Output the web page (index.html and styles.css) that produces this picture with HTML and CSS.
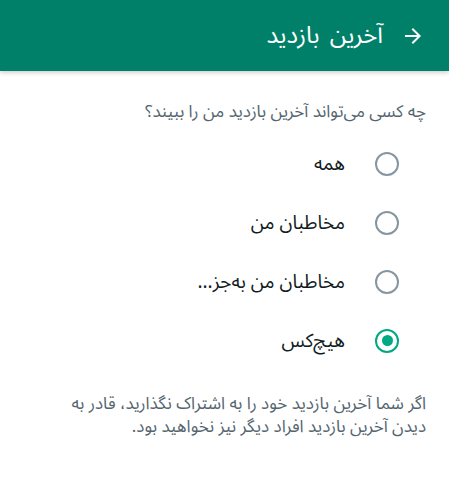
FILE: index.html
```html
<!DOCTYPE html>
<html lang="fa" dir="rtl">
<head>
    <meta charset="UTF-8">
    <meta name="viewport" content="width=device-width">
    <title>آخرین بازدید</title>
    <link rel="stylesheet" href="styles.css">
</head>
<body>
    <div class="appbar">
        <span class="back">
            <svg width="24" height="24" viewBox="0 0 24 24"><path d="M12 4l-1.41 1.41L16.17 11H4v2h12.17l-5.58 5.59L12 20l8-8z" fill="#fff"/></svg>
        </span>
        <span class="title">آخرین بازدید</span>
    </div>

    <div class="content">
        <p class="question">چه کسی می‌تواند آخرین بازدید من را ببیند؟</p>

        <div class="option">
            <span class="radio"></span>
            <span class="label">همه</span>
        </div>
        <div class="option">
            <span class="radio"></span>
            <span class="label">مخاطبان من</span>
        </div>
        <div class="option">
            <span class="radio"></span>
            <span class="label">مخاطبان من به‌جز...</span>
        </div>
        <div class="option">
            <span class="radio checked"></span>
            <span class="label">هیچ‌کس</span>
        </div>

        <p class="note">اگر شما آخرین بازدید خود را به اشتراک نگذارید، قادر به دیدن آخرین بازدید افراد دیگر نیز نخواهید بود.</p>
    </div>
</body>
</html>
```

FILE: styles.css
```css
body {
    margin: 0;
    padding: 0;
    background: #fff;
    font-family: "Noto Sans Arabic", "DejaVu Sans", sans-serif;
    color: #111b21;
}
.appbar {
    height: 71px;
    background-color: #008069;
    display: flex;
    align-items: center;
    padding: 0 24px 0 0;
    gap: 18px;
    box-shadow: 0 2px 4px rgba(0, 0, 0, 0.18);
    color: #fff;
}
.back {
    display: flex;
    width: 24px;
    height: 24px;
}
.title {
    font-size: 24px;
    line-height: 30px;
    word-spacing: 4px;
}
.content {
    padding: 0 23px 0 20px;
}
.question {
    margin: 30px 0 11px;
    font-size: 17px;
    line-height: 22px;
    color: #54656f;
}
.option {
    display: flex;
    align-items: center;
    height: 59px;
    padding-right: 27px;
    gap: 30px;
}
.radio {
    width: 20px;
    height: 20px;
    border: 2.5px solid #8696a0;
    border-radius: 50%;
    display: flex;
    align-items: center;
    justify-content: center;
}
.radio.checked {
    border-color: #00a884;
}
.radio.checked::after {
    content: "";
    width: 11px;
    height: 11px;
    border-radius: 50%;
    background: #00a884;
}
.label {
    font-size: 19px;
    line-height: 26px;
}
.note {
    margin: 23px 0 0;
    padding-left: 25px;
    font-size: 17px;
    line-height: 23px;
    color: #54656f;
}
```
